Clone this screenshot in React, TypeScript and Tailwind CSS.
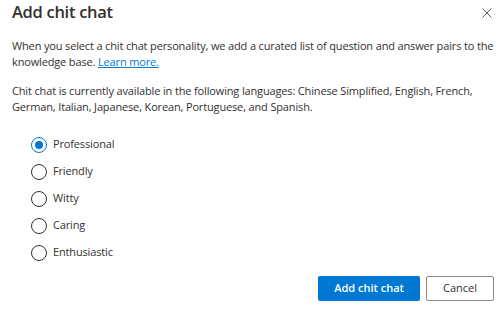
import React, { useState } from "react";

const options = ["Professional", "Friendly", "Witty", "Caring", "Enthusiastic"];

function Radio({ checked }: { checked: boolean }) {
  return checked ? (
    <span className="flex h-[16px] w-[16px] items-center justify-center rounded-full border border-[#0078d4] bg-white">
      <span className="h-[8px] w-[8px] rounded-full bg-[#0078d4]" />
    </span>
  ) : (
    <span className="h-[16px] w-[16px] rounded-full border border-[#323130] bg-white" />
  );
}

export default function App() {
  const [sel, setSel] = useState("Professional");
  return (
    <div
      className="relative flex h-[312px] w-[502px] flex-col bg-white pl-[12px] pr-[8px] text-[#323130]"
      style={{ fontFamily: '"Open Sans", "Noto Sans", Arial, sans-serif' }}
    >
      <div className="flex h-[24px] items-center justify-between">
        <h1 className="text-[16.5px] font-semibold leading-[24px] tracking-[-0.3px] text-[#323130]">Add chit chat</h1>
        <button className="mr-[1px] mt-[2px] flex h-[12px] w-[12px] items-center justify-center text-[#605e5c]">
          <svg width="10" height="10" viewBox="0 0 10 10" fill="none" stroke="currentColor" strokeWidth="1">
            <path d="M0.5 0.5 L9.5 9.5 M9.5 0.5 L0.5 9.5" />
          </svg>
        </button>
      </div>
      <p className="mt-[14px] text-[11px] leading-[16px] tracking-[-0.15px]">
        When you select a chit chat personality, we add a curated list of question and answer pairs to the
        knowledge base. <a className="text-[#0078d4] underline">Learn more.</a>
      </p>
      <p className="mt-[13px] text-[11px] leading-[16px] tracking-[-0.15px]">
        Chit chat is currently available in the following languages: Chinese Simplified, English, French,
        German, Italian, Japanese, Korean, Portuguese, and Spanish.
      </p>
      <div className="mt-[16px] flex flex-col pl-[19px]">
        {options.map((o) => (
          <label
            key={o}
            className="flex h-[27px] cursor-pointer items-center gap-[6px] text-[11px] tracking-[-0.15px]"
            onClick={() => setSel(o)}
          >
            <Radio checked={sel === o} />
            <span>{o}</span>
          </label>
        ))}
      </div>
      <div className="mt-auto mb-[11px] flex justify-end gap-[6px]">
        <button className="h-[25px] w-[102px] rounded-[2px] bg-[#0078d4] text-[11px] font-semibold text-white">
          Add chit chat
        </button>
        <button className="h-[25px] w-[68px] rounded-[2px] border border-[#8a8886] bg-white text-[11px] text-[#323130]">
          Cancel
        </button>
      </div>
    </div>
  );
}
